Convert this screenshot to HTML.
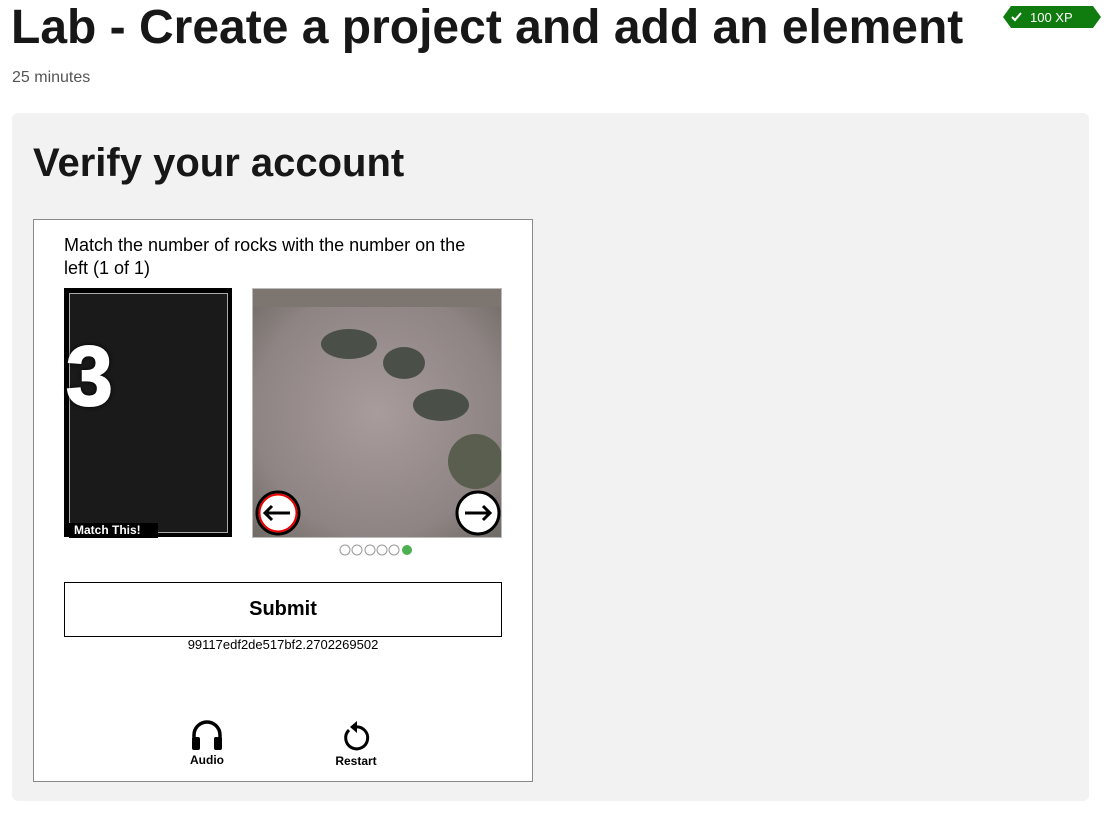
<!DOCTYPE html>
<html><head><style>
body{margin:0;background:#fff;font-family:"Liberation Sans",sans-serif;width:1109px;height:814px;overflow:hidden;position:relative}
.a{position:absolute}
</style></head><body>
<div class="a" style="left:11px;top:0px;font-size:48px;font-weight:bold;color:#171717;letter-spacing:0px;white-space:nowrap">Lab - Create a project and add an element</div>
<svg class="a" style="left:1003px;top:6px" width="98" height="22"><polygon points="8,0 90,0 98,11 90,22 8,22 0,11" fill="#107c10"/><path d="M9 11 l3 3 l6 -7" stroke="#fff" stroke-width="2" fill="none"/><text x="27" y="16" fill="#fff" font-size="13" font-family="Liberation Sans">100 XP</text></svg>
<div class="a" style="left:12px;top:69px;font-size:16px;color:#555">25 minutes</div>
<div class="a" style="left:12px;top:113px;width:1077px;height:688px;background:#f2f2f2;border-radius:6px"></div>
<div class="a" style="left:33px;top:141px;font-size:40px;color:#171717;font-weight:bold">Verify your account</div>
<div class="a" style="left:33px;top:219px;width:498px;height:561px;background:#fff;border:1px solid #8a8a8a"></div>
<div class="a" style="left:64px;top:234px;width:418px;font-size:18px;line-height:23px;color:#000">Match the number of rocks with the number on the left (1 of 1)</div>
<div class="a" style="left:64px;top:288px;width:168px;height:249px;background:#000"></div>
<div class="a" style="left:69px;top:293px;width:157px;height:238px;background:#1a1a1a;border:1px solid #aaa"></div>
<div class="a" style="left:66px;top:328px;font-size:84px;font-weight:bold;color:#fff;text-shadow:0 0 6px #000,0 0 3px #000;-webkit-text-stroke:2px #fff">3</div>
<div class="a" style="left:69px;top:523px;width:84px;height:15px;background:#000;color:#fff;font-size:12px;font-weight:bold;padding-left:5px">Match This!</div>
<div class="a" style="left:252px;top:288px;width:248px;height:248px;border:1px solid #bbb;background:radial-gradient(ellipse at 50% 50%,#a89c9c,#8e8483 70%,#6f6a64);overflow:hidden">
<div class="a" style="left:68px;top:40px;width:56px;height:30px;border-radius:50%;background:#4a5048"></div>
<div class="a" style="left:130px;top:58px;width:42px;height:32px;border-radius:50%;background:#4a5048"></div>
<div class="a" style="left:160px;top:100px;width:56px;height:32px;border-radius:50%;background:#4a5048"></div>
<div class="a" style="left:195px;top:145px;width:55px;height:55px;border-radius:50%;background:#5a5e4e"></div>
<div class="a" style="left:0;top:0;width:248px;height:18px;background:#7d7670"></div>
</div>
<svg class="a" style="left:255px;top:490px" width="48" height="48"><circle cx="23" cy="23" r="21" fill="#fff" stroke="#000" stroke-width="3"/><circle cx="23" cy="23" r="18.5" fill="none" stroke="#e00" stroke-width="2"/><path d="M10 23 H35 M17 16 L10 23 L17 30" stroke="#000" stroke-width="3" fill="none"/></svg>
<svg class="a" style="left:455px;top:490px" width="48" height="48"><circle cx="23" cy="23" r="21" fill="#fff" stroke="#000" stroke-width="3"/><path d="M10 23 H35 M28 16 L35 23 L28 30" stroke="#000" stroke-width="3" fill="none"/></svg>
<svg class="a" style="left:338px;top:543px" width="80" height="14"><g fill="none" stroke="#999"><circle cx="7" cy="7" r="5"/><circle cx="19" cy="7" r="5"/><circle cx="32" cy="7" r="5"/><circle cx="44" cy="7" r="5"/><circle cx="56" cy="7" r="5"/></g><circle cx="69" cy="7" r="5" fill="#4caf50"/></svg>
<div class="a" style="left:64px;top:582px;width:436px;height:53px;border:1px solid #000;text-align:center;line-height:53px;font-size:20px;font-weight:bold">Submit</div>
<div class="a" style="left:64px;top:637px;width:438px;text-align:center;font-size:13px">99117edf2de517bf2.2702269502</div>
<svg class="a" style="left:190px;top:718px" width="34" height="34"><path d="M4 26 V17 A13 13 0 0 1 30 17 V26" fill="none" stroke="#000" stroke-width="3.5"/><rect x="2" y="19" width="8" height="13" rx="2"/><rect x="24" y="19" width="8" height="13" rx="2"/></svg>
<div class="a" style="left:176px;top:753px;width:62px;text-align:center;font-size:12px;font-weight:bold">Audio</div>
<svg class="a" style="left:340px;top:718px" width="32" height="34"><path d="M9 12 A11 11 0 1 0 15 9" fill="none" stroke="#000" stroke-width="3"/><path d="M17 3 L10 9 L17 15 Z"/></svg>
<div class="a" style="left:325px;top:754px;width:62px;text-align:center;font-size:12px;font-weight:bold">Restart</div>
</body></html>
